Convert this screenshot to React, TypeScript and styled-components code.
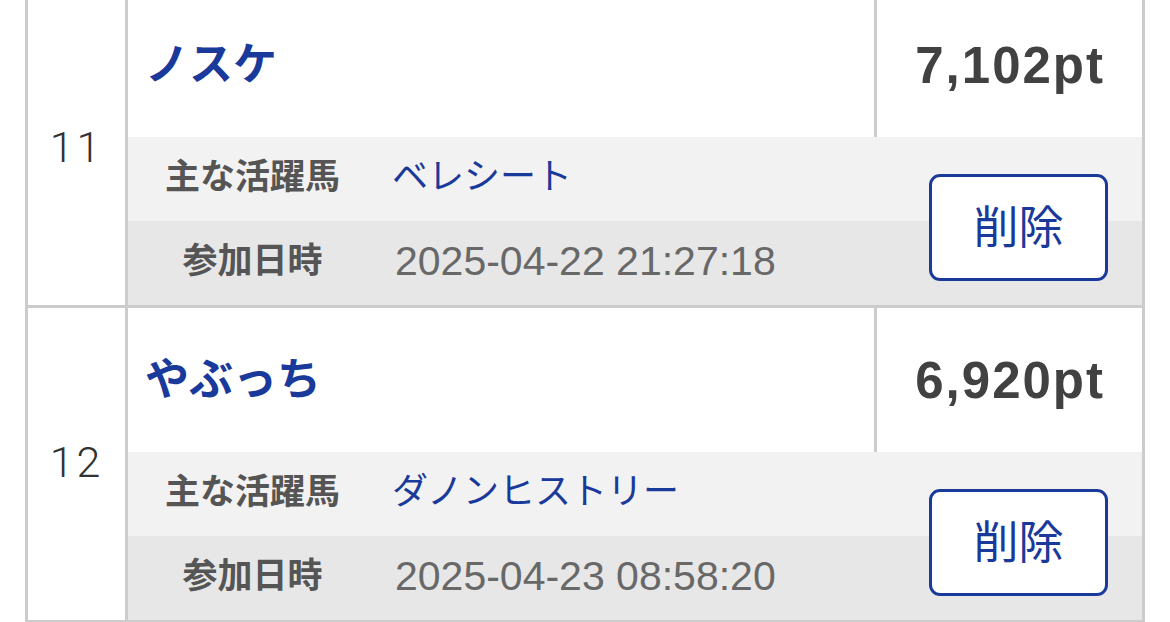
import React from 'react';
import styled, { createGlobalStyle } from 'styled-components';

const GlobalStyle = createGlobalStyle`
  html, body {
    margin: 0;
    padding: 0;
    background: #ffffff;
  }
  body {
    font-family: 'Noto Sans CJK JP', 'Noto Sans', sans-serif;
    overflow: hidden;
  }
`;

const Page = styled.div`
  margin-top: -10px;
  padding-left: 25px;
  width: 1145px;
  box-sizing: border-box;
`;

const Table = styled.div`
  border: 3px solid #cccccc;
  border-top: none;
`;

const Entry = styled.div`
  display: grid;
  grid-template-columns: 100px 1fr;
  border-top: 3px solid #cccccc;
`;

const RankCell = styled.div`
  display: flex;
  align-items: center;
  justify-content: center;
  padding-bottom: 4px;
  border-right: 3px solid #cccccc;
  font-family: Roboto, 'Liberation Sans', sans-serif;
  font-size: 43px;
  font-weight: 300;
  color: #333333;
  letter-spacing: 3px;
`;

const Body = styled.div`
  display: flex;
  flex-direction: column;
`;

const Head = styled.div`
  display: flex;
  height: 144px;
  background: #ffffff;
`;

const NameCell = styled.div`
  flex: 1;
  display: flex;
  align-items: center;
  padding: 0 0 8px 17px;
  font-size: 44px;
  font-weight: 700;
  color: #1a3a9b;
`;

const ScoreCell = styled.div`
  width: 268px;
  display: flex;
  align-items: center;
  justify-content: flex-end;
  padding-right: 37px;
  box-sizing: border-box;
  border-left: 3px solid #cccccc;
  font-family: 'Liberation Sans', Arial, sans-serif;
  font-size: 51px;
  font-weight: 700;
  letter-spacing: 2px;
  color: #414141;
`;

const Details = styled.div`
  position: relative;
`;

const InfoRow = styled.div<{ $tone: 'light' | 'dark' }>`
  display: flex;
  align-items: center;
  height: 84px;
  background: ${p => (p.$tone === 'light' ? '#f2f2f2' : '#e7e7e7')};
`;

const Label = styled.div`
  width: 249px;
  padding-bottom: 12px;
  text-align: center;
  font-size: 35px;
  font-weight: 700;
  color: #555555;
`;

const HorseName = styled.div`
  padding: 0 0 12px 15px;
  font-size: 36px;
  color: #1a3a9b;
`;

const JoinedAt = styled.div`
  padding: 0 0 4px 18px;
  font-family: 'Liberation Sans', Arial, sans-serif;
  font-size: 41px;
  color: #686868;
`;

const DeleteButton = styled.button`
  position: absolute;
  top: 37px;
  right: 34px;
  width: 179px;
  height: 107px;
  padding: 0 0 6px;
  box-sizing: border-box;
  background: #ffffff;
  border: 3px solid #1a3a9b;
  border-radius: 11px;
  color: #1a3a9b;
  font-family: inherit;
  font-size: 45px;
  cursor: pointer;
`;

const entries = [
  { rank: 11, name: 'ノスケ', score: '7,102pt', horse: 'ベレシート', joined: '2025-04-22 21:27:18' },
  { rank: 12, name: 'やぶっち', score: '6,920pt', horse: 'ダノンヒストリー', joined: '2025-04-23 08:58:20' },
];

const App: React.FC = () => {
  return (
    <>
      <GlobalStyle />
      <Page>
        <Table>
          {entries.map(entry => (
            <Entry key={entry.rank}>
              <RankCell>{entry.rank}</RankCell>
              <Body>
                <Head>
                  <NameCell>{entry.name}</NameCell>
                  <ScoreCell>{entry.score}</ScoreCell>
                </Head>
                <Details>
                  <InfoRow $tone="light">
                    <Label>主な活躍馬</Label>
                    <HorseName>{entry.horse}</HorseName>
                  </InfoRow>
                  <InfoRow $tone="dark">
                    <Label>参加日時</Label>
                    <JoinedAt>{entry.joined}</JoinedAt>
                  </InfoRow>
                  <DeleteButton>削除</DeleteButton>
                </Details>
              </Body>
            </Entry>
          ))}
        </Table>
      </Page>
    </>
  );
};

export default App;
